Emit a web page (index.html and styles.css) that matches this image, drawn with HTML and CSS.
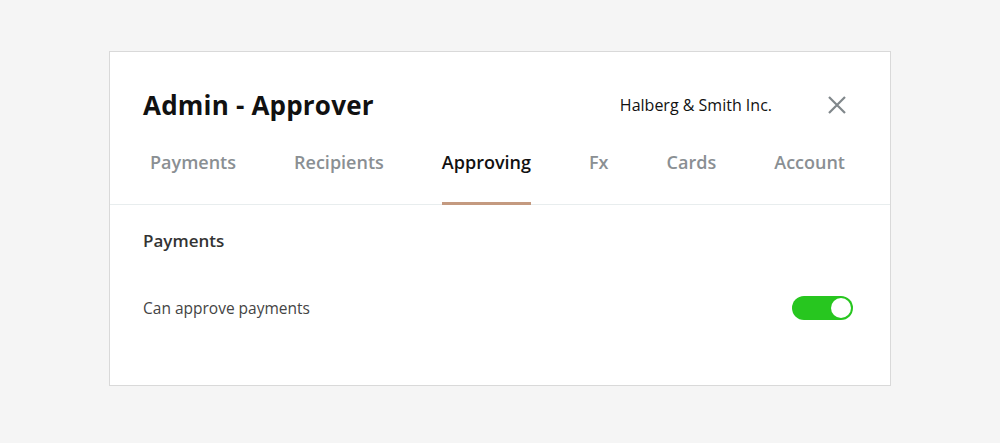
FILE: index.html
```html
<!DOCTYPE html>
<html lang="en">
<head>
    <meta charset="UTF-8">
    <meta name="viewport" content="width=device-width, initial-scale=1.0">
    <title>Admin - Approver</title>
    <link rel="stylesheet" href="styles.css">
</head>
<body>
    <div class="card">
        <div class="card-header">
            <div class="title-row">
                <h1 class="title">Admin - Approver</h1>
                <div class="company">Halberg &amp; Smith Inc.</div>
                <button class="close" aria-label="Close">
                    <svg width="20" height="20" viewBox="0 0 20 20">
                        <path d="M2 2 L18 18 M18 2 L2 18" stroke="#80878b" stroke-width="2.2" fill="none"/>
                    </svg>
                </button>
            </div>
            <nav class="tabs">
                <a href="#" class="tab">Payments</a>
                <a href="#" class="tab">Recipients</a>
                <a href="#" class="tab active">Approving</a>
                <a href="#" class="tab">Fx</a>
                <a href="#" class="tab">Cards</a>
                <a href="#" class="tab">Account</a>
            </nav>
        </div>

        <div class="card-body">
            <h2 class="section-title">Payments</h2>
            <div class="setting">
                <span class="setting-label">Can approve payments</span>
                <label class="toggle">
                    <input type="checkbox" checked>
                    <span class="slider"></span>
                </label>
            </div>
        </div>
    </div>
</body>
</html>
```

FILE: styles.css
```css
* {
    margin: 0;
    padding: 0;
    box-sizing: border-box;
}

body {
    font-family: 'Open Sans', Lato, sans-serif;
    background: #f5f5f5;
    display: flex;
    justify-content: center;
    padding-top: 51px;
    color: #222;
}

.card {
    width: 782px;
    height: 335px;
    background: #fff;
    border: 1px solid #d9d9d9;
}

.card-header {
    border-bottom: 1px solid #e8edee;
    padding: 0 33px;
}

.title-row {
    display: flex;
    align-items: center;
    padding-top: 35px;
    height: 70px;
}

.title {
    font-size: 26px;
    font-weight: 700;
    color: #111;
    flex: 1;
    letter-spacing: 0.2px;
}

.company {
    font-size: 16px;
    color: #111;
    margin-right: 55px;
}

.close {
    background: none;
    border: none;
    width: 20px;
    height: 20px;
    margin-right: 10px;
    cursor: pointer;
}

.close svg {
    display: block;
}

.tabs {
    display: flex;
    justify-content: space-between;
    padding: 0 12px 0 7px;
    margin-top: 28px;
}

.tab {
    font-size: 18px;
    font-weight: 600;
    color: #8a8f93;
    text-decoration: none;
    padding: 0 0 28px;
    border-bottom: 3px solid transparent;
    margin-bottom: -1px;
}

.tab.active {
    color: #111;
    border-bottom-color: #c49a80;
}

.card-body {
    padding: 24px 37px 0 33px;
}

.section-title {
    font-size: 17px;
    font-weight: 600;
    color: #333;
}

.setting {
    display: flex;
    align-items: center;
    justify-content: space-between;
    margin-top: 44px;
}

.setting-label {
    font-size: 15.5px;
    color: #444;
}

.toggle {
    position: relative;
    display: inline-block;
    width: 61px;
    height: 24px;
}

.toggle input {
    display: none;
}

.slider {
    position: absolute;
    inset: 0;
    background: #27c61f;
    border-radius: 12px;
    cursor: pointer;
}

.slider::after {
    content: "";
    position: absolute;
    top: 2px;
    right: 2px;
    width: 20px;
    height: 20px;
    border-radius: 50%;
    background: #fff;
}
```
